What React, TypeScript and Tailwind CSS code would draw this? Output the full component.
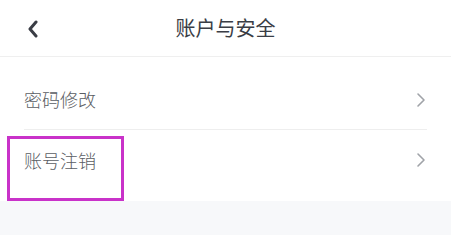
import React from "react";

function Row({ label, last }: { label: string; last?: boolean }) {
  return (
    <div className="px-6">
      <div className={`h-[60px] flex items-center justify-between ${last ? "" : "border-b border-[#eeeeee]"}`}>
        <span className="text-[18px] font-light text-[#5a5d63]">{label}</span>
        <svg width="10" height="16" viewBox="0 0 10 16" className="mr-[1px]">
          <path d="M2 2 L8 8 L2 14" fill="none" stroke="#a0a3a8" strokeWidth="1.6" strokeLinecap="round" strokeLinejoin="round" />
        </svg>
      </div>
    </div>
  );
}

export default function App() {
  return (
    <div
      className="relative w-[451px] h-[235px] bg-[#f7f8fa] overflow-hidden"
      style={{ fontFamily: '"Noto Sans CJK SC", "Noto Sans", sans-serif' }}
    >
      <div className="h-[57px] bg-white border-b border-[#efefef] flex items-center relative">
        <div className="absolute left-[26px] top-[20px]">
          <svg width="14" height="18" viewBox="0 0 14 18">
            <path d="M10 2 L4 9 L10 16" fill="none" stroke="#3a3d45" strokeWidth="3" strokeLinecap="round" strokeLinejoin="round" />
          </svg>
        </div>
        <div className="flex-1 text-center text-[20px] text-[#3a3d45]">账户与安全</div>
      </div>
      <div className="bg-white pt-[13px] pb-[11px]">
        <Row label="密码修改" />
        <Row label="账号注销" last />
      </div>
      <div className="absolute left-[7px] top-[136px] w-[117px] h-[65px] border-[3px] border-[#c932c9] pointer-events-none" />
    </div>
  );
}
